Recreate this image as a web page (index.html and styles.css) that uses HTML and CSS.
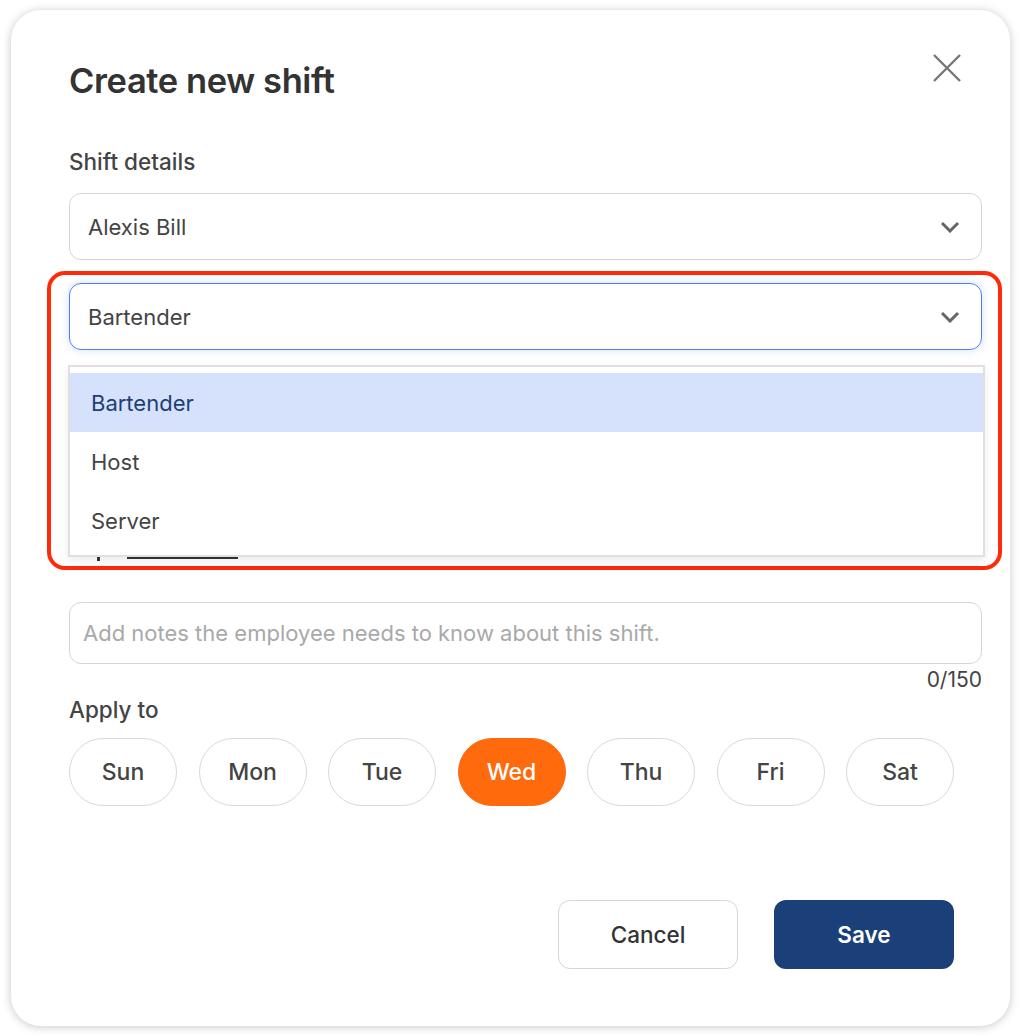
FILE: index.html
```html
<!DOCTYPE html>
<html lang="en">

<head>
  <meta charset="UTF-8">
  <meta name="viewport" content="width=device-width, initial-scale=1.0">

  <link rel="stylesheet" href="styles.css">
</head>

<body>
  <div class="modal">
    <div class="modal-header">
      <h1>Create new shift</h1>
      <button class="close" aria-label="Close">
        <svg width="28" height="28" viewBox="0 0 28 28">
          <path d="M1 1 L27 27 M27 1 L1 27" stroke="#777" stroke-width="2.4" fill="none" />
        </svg>
      </button>
    </div>

    <h2 class="label">Shift details</h2>

    <div class="select">
      <span>Alexis Bill</span>
      <svg class="chevron" width="20" height="12" viewBox="0 0 20 12">
        <path d="M2 2 L10 10 L18 2" stroke="#666" stroke-width="3" fill="none" />
      </svg>
    </div>

    <div class="select-wrap">
      <div class="select select-open">
        <span>Bartender</span>
        <svg class="chevron" width="20" height="12" viewBox="0 0 20 12">
          <path d="M2 2 L10 10 L18 2" stroke="#666" stroke-width="3" fill="none" />
        </svg>
      </div>

      <ul class="options">
        <li class="option active">Bartender</li>
        <li class="option">Host</li>
        <li class="option">Server</li>
      </ul>
    </div>

    <!-- covered by the open dropdown -->
    <div class="time-row">
      <span class="caret"></span>
      <span class="underline"></span>
    </div>

    <div class="notes">Add notes the employee needs to know about this shift.</div>
    <div class="counter">0/150</div>

    <h2 class="label label-apply">Apply to</h2>

    <div class="days">
      <button class="day">Sun</button>
      <button class="day">Mon</button>
      <button class="day">Tue</button>
      <button class="day day-active">Wed</button>
      <button class="day">Thu</button>
      <button class="day">Fri</button>
      <button class="day">Sat</button>
    </div>

    <div class="actions">
      <button class="btn btn-cancel">Cancel</button>
      <button class="btn btn-save">Save</button>
    </div>

    <div class="highlight"></div>
  </div>
</body>

</html>
```

FILE: styles.css
```css
* {
  margin: 0;
  padding: 0;
  box-sizing: border-box;
}

body {
  width: 100vw;
  height: 100vh;
  overflow: hidden;
  background: #fff;
  font-family: Inter, "Noto Sans", sans-serif;
  color: #333;
}

.modal {
  position: relative;
  width: 999px;
  height: 1016px;
  margin: 10px 0 0 11px;
  padding: 44px 28px 0 58px;

  background: #fff;
  border-radius: 30px;
  box-shadow: 0 1px 10px rgba(0, 0, 0, 0.22);
}

.modal-header {
  display: flex;
  justify-content: space-between;
  align-items: flex-start;
}

.modal-header h1 {
  margin-top: 7px;

  font-size: 34.5px;
  line-height: 40px;
  font-weight: 600;
  letter-spacing: -0.4px;
  color: #333;
}

.close {
  width: 28px;
  height: 28px;
  margin-right: 21px;

  border: none;
  background: none;
}

.close svg {
  display: block;
}

.label {
  margin-top: 49px;

  font-size: 22.5px;
  line-height: 24px;
  font-weight: 500;
  color: #444;
}

.select {
  display: flex;
  align-items: center;
  justify-content: space-between;

  height: 67px;
  margin-top: 19px;
  padding: 0 21px 0 18px;

  border: 1px solid #d6d6d6;
  border-radius: 12px;

  font-size: 22px;
  color: #444;
}

.select-wrap {
  position: relative;
  margin-top: 23px;
}

.select-open {
  margin-top: 0;
  border-color: #4d7ef6;
  box-shadow: 0 0 8px rgba(77, 126, 246, 0.25);
}

.options {
  position: absolute;
  top: 82px;
  left: -1px;
  right: -3px;
  z-index: 2;

  list-style: none;
  padding: 6px 0 5px;

  background: #fff;
  border: 2px solid #e0e0e0;
  box-shadow: 0 4px 10px rgba(0, 0, 0, 0.08);
}

.option {
  display: flex;
  align-items: center;

  height: 59px;
  padding-left: 21px;

  font-size: 22px;
  color: #444;
}

.option.active {
  background: #d6e1fc;
  color: #1e3f73;
}

.time-row {
  display: flex;
  align-items: flex-end;

  height: 24px;
  margin-top: 187px;
}

.caret {
  width: 3px;
  height: 20px;
  margin-left: 28px;
  background: #333;
}

.underline {
  width: 111px;
  height: 2px;
  margin-left: 27px;
  margin-bottom: 2px;
  background: #333;
}

.notes {
  display: flex;
  align-items: center;

  height: 62px;
  margin-top: 41px;
  padding: 0 13px;

  border: 1px solid #d6d6d6;
  border-radius: 12px;

  font-size: 22px;
  color: #a9a9a9;
}

.counter {
  margin-top: 5px;

  text-align: right;
  font-size: 21px;
  line-height: 22px;
  color: #444;
}

.label-apply {
  margin-top: 7px;
}

.days {
  display: flex;
  gap: 21.5px;
  margin-top: 16px;
}

.day {
  width: 108px;
  height: 68px;

  border: 1px solid #d9d9d9;
  border-radius: 34px;
  background: #fff;

  font-family: Inter, "Noto Sans", sans-serif;
  font-size: 23px;
  font-weight: 500;
  color: #444;
}

.day-active {
  border-color: #ff6a0d;
  background: #ff6a0d;
  color: #fff;
}

.actions {
  display: flex;
  justify-content: flex-end;
  gap: 36px;

  margin-top: 94px;
  padding-right: 28px;
}

.btn {
  width: 180px;
  height: 69px;

  border-radius: 12px;

  font-family: Inter, "Noto Sans", sans-serif;
  font-size: 22.5px;
}

.btn-cancel {
  border: 1px solid #d6d6d6;
  background: #fff;
  font-weight: 500;
  color: #333;
}

.btn-save {
  border: none;
  background: #1b3f78;
  font-weight: 600;
  color: #fff;
}

/* annotation box drawn over the role field */
.highlight {
  position: absolute;
  left: 36px;
  top: 261px;
  width: 955px;
  height: 299px;

  border: 4.5px solid #fe2a0a;
  border-radius: 18px;
  pointer-events: none;
}
```
